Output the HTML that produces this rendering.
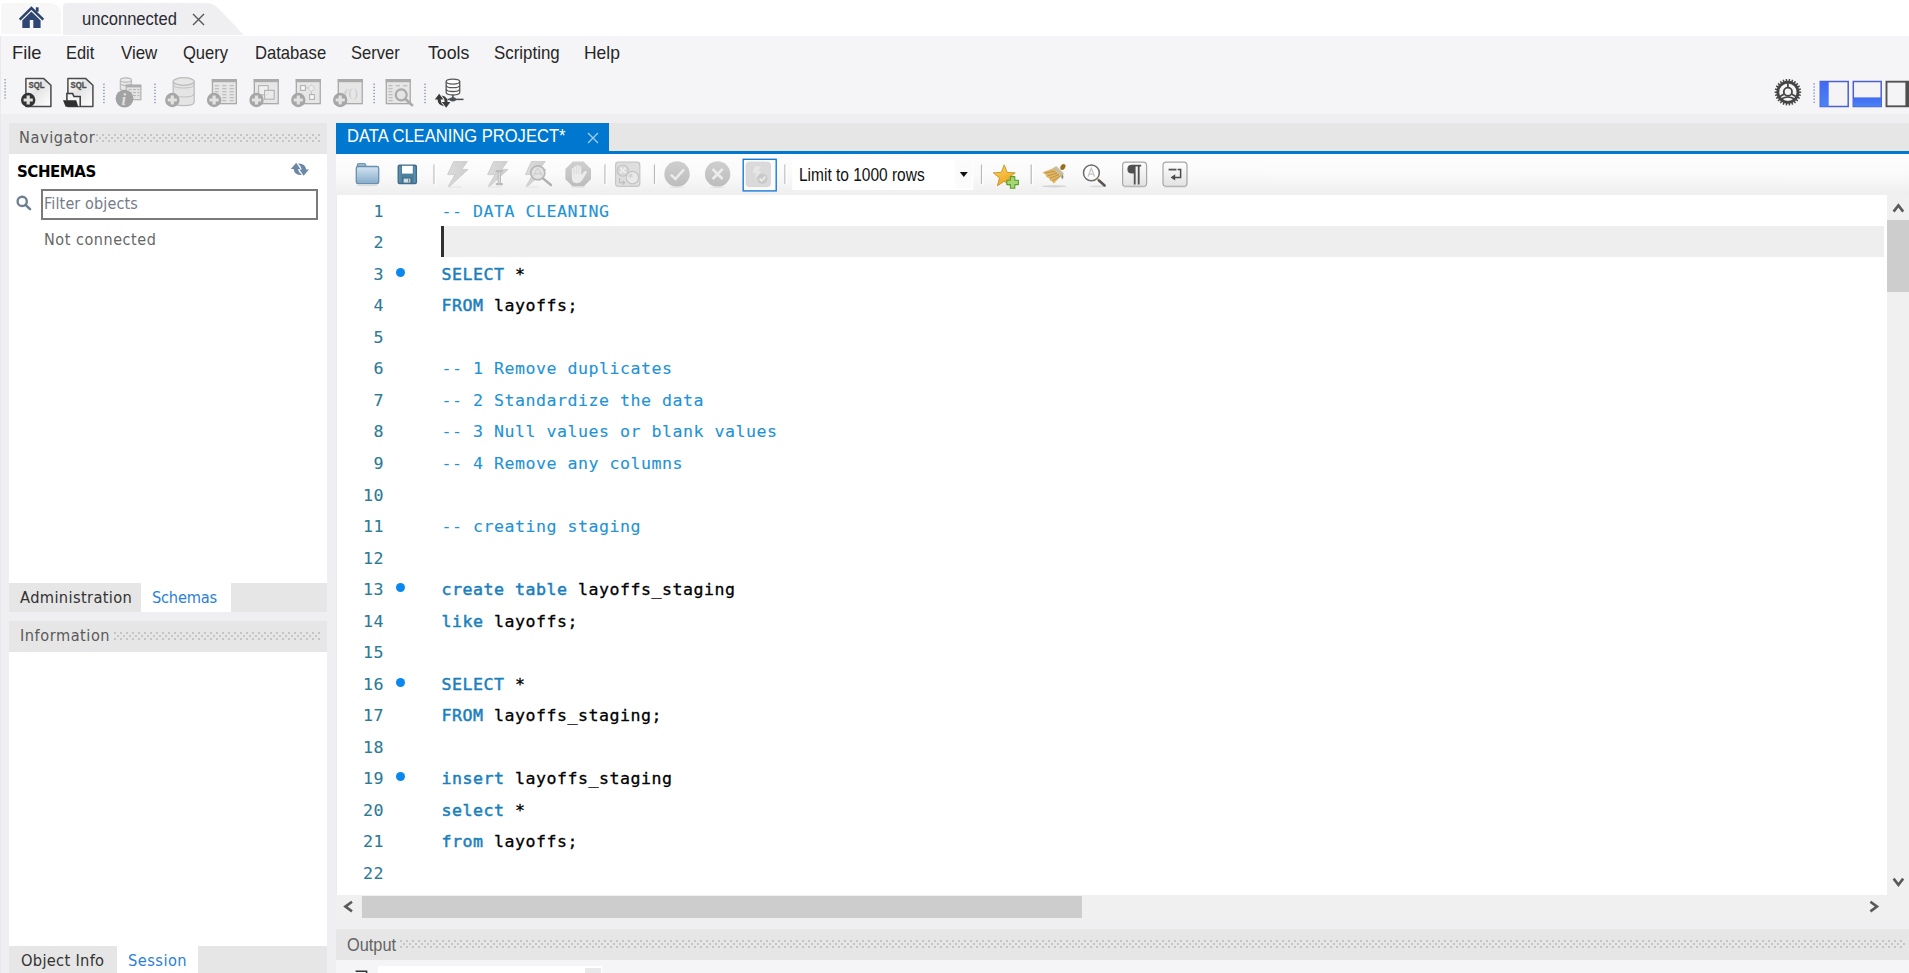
<!DOCTYPE html>
<html lang="en">
<head>
<meta charset="utf-8">
<title>MySQL Workbench</title>
<style>
html,body{margin:0;padding:0;}
body{width:1909px;height:973px;overflow:hidden;position:relative;background:#efeff1;font-family:"Liberation Sans",sans-serif;font-size:16.5px;color:#1a1a1a;}
.abs{position:absolute;}
.t{position:absolute;white-space:nowrap;line-height:1;}
.tah{font-family:"DejaVu Sans",sans-serif;transform:scaleX(0.9);transform-origin:0 0;}
/* top tab strip */
#topstrip{left:0;top:0;width:1909px;height:35.5px;background:#fff;}
#hometab{left:1px;top:2.6px;width:60.3px;height:31.2px;background:#f7f7f8;border-top-right-radius:11px 10px;border-top-left-radius:4px;}
#conntab{left:62.9px;top:2.7px;width:190px;height:32.8px;}
#menubar{left:0;top:35.5px;width:1909px;height:78px;background:#f5f5f7;}
.menu{top:43.2px;font-size:19px;color:#262626;transform-origin:0 0;}
.ms{font-size:19px;transform-origin:0 0;}
/* panels */
.hdr{background:#e6e6e6;}
.hdr .t{color:#5a5a5a;}
.dots{position:absolute;height:8px;background-image:radial-gradient(circle at 1px 1px,#b6b6b6 0.55px,transparent 1.05px),radial-gradient(circle at 1px 1px,#b6b6b6 0.55px,transparent 1.05px);background-size:6px 6px,6px 6px;background-position:0 0,3px 3px;}
/* editor */
#editor{left:336px;top:195px;width:1551px;height:700px;background:#fff;overflow:hidden;}
.ln{position:absolute;left:0;width:48px;text-align:right;color:#2b7a96;-webkit-text-stroke:0.1px currentColor;}
.code{-webkit-text-stroke:0.3px currentColor;font-family:"DejaVu Sans Mono","Liberation Mono",monospace;font-size:16.6px;letter-spacing:0.507px;white-space:pre;line-height:31.52px;}
.row{position:absolute;left:0;height:31.52px;width:1548px;}
.row .ln{top:0;}
.row .tx{position:absolute;left:105.5px;top:0;color:#000;}
.c{color:#1e93d6;-webkit-text-stroke:0.12px currentColor;}
.k{color:#1b7fbd;-webkit-text-stroke:0.5px currentColor;}
.dot{position:absolute;left:59.9px;top:8.9px;width:9.2px;height:9.2px;border-radius:50%;background:#0b88ee;}
</style>
</head>
<body>
<!-- TOP TAB STRIP -->
<div class="abs" id="topstrip"></div>
<div class="abs" id="hometab"></div>
<svg class="abs" id="conntab" viewBox="0 0 190 33.3" preserveAspectRatio="none"><path d="M0 33.3 L0 4 Q0 0 4 0 L142 0 Q150 0 155 5 L181.6 33.3 Z" fill="#efeff1"/></svg>
<svg class="abs" style="left:16px;top:4px" width="32" height="26" viewBox="16 4 32 26"><path d="M19.7 19.7 L31.4 8 L43.3 19.7" fill="none" stroke="#2d436e" stroke-width="2.5"/><rect x="35.8" y="7.3" width="2.8" height="4.4" fill="#2d436e"/><path d="M22.3 27.9 V20.4 L31.4 11.5 L40.6 20.4 V27.9 H33.3 V20.1 H29.8 V27.9 Z" fill="#2f4672"/></svg>
<div class="t ms" style="left:82.13px;top:9.1px;color:#2a2a33;transform:scaleX(0.872)">unconnected</div>
<svg class="abs" style="left:192px;top:13px" width="13" height="13" viewBox="0 0 13 13"><path d="M1 1 L12 12 M12 1 L1 12" stroke="#555" stroke-width="1.4" fill="none"/></svg>

<!-- MENU BAR + TOOLBAR -->
<div class="abs" id="menubar"></div>
<div class="t menu" style="left:11.94px;transform:scaleX(0.964)">File</div>
<div class="t menu" style="left:66.14px;transform:scaleX(0.863)">Edit</div>
<div class="t menu" style="left:121.3px;transform:scaleX(0.888)">View</div>
<div class="t menu" style="left:183.3px;transform:scaleX(0.871)">Query</div>
<div class="t menu" style="left:254.92px;transform:scaleX(0.875)">Database</div>
<div class="t menu" style="left:351.0px;transform:scaleX(0.869)">Server</div>
<div class="t menu" style="left:427.7px;transform:scaleX(0.933)">Tools</div>
<div class="t menu" style="left:493.7px;transform:scaleX(0.889)">Scripting</div>
<div class="t menu" style="left:584.28px;transform:scaleX(0.92)">Help</div>
<div id="maintools"><svg class="abs" style="left:0;top:68px" width="1909" height="48" viewBox="0 68 1909 48"><defs><linearGradient id="pg" x1="0" y1="0" x2="1" y2="1"><stop offset="0" stop-color="#ffffff"/><stop offset="0.45" stop-color="#e4e4e4"/><stop offset="1" stop-color="#ffffff"/></linearGradient><linearGradient id="bl1" x1="0" y1="0" x2="0" y2="1"><stop offset="0" stop-color="#4169f2"/><stop offset="1" stop-color="#4a84f5"/></linearGradient></defs><rect x="4.3" y="79.10" width="1.7" height="1.3" fill="#93a2c2"/><rect x="4.3" y="82.15" width="1.7" height="1.3" fill="#93a2c2"/><rect x="4.3" y="85.20" width="1.7" height="1.3" fill="#93a2c2"/><rect x="4.3" y="88.25" width="1.7" height="1.3" fill="#93a2c2"/><rect x="4.3" y="91.30" width="1.7" height="1.3" fill="#93a2c2"/><rect x="4.3" y="94.35" width="1.7" height="1.3" fill="#93a2c2"/><rect x="4.3" y="97.40" width="1.7" height="1.3" fill="#93a2c2"/><rect x="103.1" y="83.60" width="1.7" height="1.3" fill="#93a2c2"/><rect x="103.1" y="86.65" width="1.7" height="1.3" fill="#93a2c2"/><rect x="103.1" y="89.70" width="1.7" height="1.3" fill="#93a2c2"/><rect x="103.1" y="92.75" width="1.7" height="1.3" fill="#93a2c2"/><rect x="103.1" y="95.80" width="1.7" height="1.3" fill="#93a2c2"/><rect x="103.1" y="98.85" width="1.7" height="1.3" fill="#93a2c2"/><rect x="103.1" y="101.90" width="1.7" height="1.3" fill="#93a2c2"/><rect x="154.1" y="83.60" width="1.7" height="1.3" fill="#93a2c2"/><rect x="154.1" y="86.65" width="1.7" height="1.3" fill="#93a2c2"/><rect x="154.1" y="89.70" width="1.7" height="1.3" fill="#93a2c2"/><rect x="154.1" y="92.75" width="1.7" height="1.3" fill="#93a2c2"/><rect x="154.1" y="95.80" width="1.7" height="1.3" fill="#93a2c2"/><rect x="154.1" y="98.85" width="1.7" height="1.3" fill="#93a2c2"/><rect x="154.1" y="101.90" width="1.7" height="1.3" fill="#93a2c2"/><rect x="373.3" y="83.60" width="1.7" height="1.3" fill="#93a2c2"/><rect x="373.3" y="86.65" width="1.7" height="1.3" fill="#93a2c2"/><rect x="373.3" y="89.70" width="1.7" height="1.3" fill="#93a2c2"/><rect x="373.3" y="92.75" width="1.7" height="1.3" fill="#93a2c2"/><rect x="373.3" y="95.80" width="1.7" height="1.3" fill="#93a2c2"/><rect x="373.3" y="98.85" width="1.7" height="1.3" fill="#93a2c2"/><rect x="373.3" y="101.90" width="1.7" height="1.3" fill="#93a2c2"/><rect x="424.2" y="83.60" width="1.7" height="1.3" fill="#93a2c2"/><rect x="424.2" y="86.65" width="1.7" height="1.3" fill="#93a2c2"/><rect x="424.2" y="89.70" width="1.7" height="1.3" fill="#93a2c2"/><rect x="424.2" y="92.75" width="1.7" height="1.3" fill="#93a2c2"/><rect x="424.2" y="95.80" width="1.7" height="1.3" fill="#93a2c2"/><rect x="424.2" y="98.85" width="1.7" height="1.3" fill="#93a2c2"/><rect x="424.2" y="101.90" width="1.7" height="1.3" fill="#93a2c2"/><rect x="1813.3" y="83.30" width="1.7" height="1.3" fill="#93a2c2"/><rect x="1813.3" y="86.35" width="1.7" height="1.3" fill="#93a2c2"/><rect x="1813.3" y="89.40" width="1.7" height="1.3" fill="#93a2c2"/><rect x="1813.3" y="92.45" width="1.7" height="1.3" fill="#93a2c2"/><rect x="1813.3" y="95.50" width="1.7" height="1.3" fill="#93a2c2"/><rect x="1813.3" y="98.55" width="1.7" height="1.3" fill="#93a2c2"/><rect x="1813.3" y="101.60" width="1.7" height="1.3" fill="#93a2c2"/><path d="M25.9 78.4 H43.5 L50.9 85.2 V106.6 H25.9 Z" fill="url(#pg)" stroke="#4a4a4a" stroke-width="1.5" stroke-linejoin="round"/><text x="28.5" y="87.9" font-family="Liberation Sans,sans-serif" font-weight="bold" font-size="9.4" fill="#505050" stroke="#505050" stroke-width="0.35" textLength="16" lengthAdjust="spacingAndGlyphs">SQL</text><circle cx="28.2" cy="100" r="7.2" fill="#333333"/><path d="M23.6 100 H32.8 M28.2 95.4 V104.6" stroke="#e0e0e0" stroke-width="3.2" fill="none"/><path d="M67.9 78.4 H85.5 L92.9 85.2 V106.6 H67.9 Z" fill="url(#pg)" stroke="#4a4a4a" stroke-width="1.5" stroke-linejoin="round"/><text x="70.5" y="87.9" font-family="Liberation Sans,sans-serif" font-weight="bold" font-size="9.4" fill="#505050" stroke="#505050" stroke-width="0.35" textLength="16" lengthAdjust="spacingAndGlyphs">SQL</text><path d="M66.9 100.5 V93.6 H72.6 L74 96.6 H80.2 V106.6" fill="#f4f4f4" stroke="#3a3a3a" stroke-width="1.5"/><path d="M63 100.3 H76.2 L78.2 106.8 H65.6 Z" fill="#2f2f2f"/><g><path d="M120.3 80 V89.5 Q126 92.5 131.4 89.5 V80" fill="#e6e6e6" stroke="#b8b8b8" stroke-width="1.1"/><ellipse cx="125.85" cy="80" rx="5.55" ry="2.1" fill="#ececec" stroke="#b8b8b8" stroke-width="1.1"/><path d="M120.3 84.2 Q126 87 131.4 84.2" fill="none" stroke="#b8b8b8" stroke-width="1.1"/><rect x="126.2" y="85" width="14.7" height="14.7" fill="#e4e4e4" stroke="#adadad" stroke-width="1.1"/><rect x="126.2" y="85" width="14.7" height="2.4" fill="#adadad"/><path d="M128.5 89.6 H131.5 M133 89.6 H136 M137.3 89.6 H139.6 M128.5 92.6 H131.5 M133 92.6 H136 M137.3 92.6 H139.6 M133 95.6 H136 M137.3 95.6 H139.6" stroke="#b5b5b5" stroke-width="1"/><circle cx="124.5" cy="98.6" r="8.9" fill="#a2a2a2"/><text x="121.6" y="104.6" font-family="Liberation Serif,serif" font-style="italic" font-weight="bold" font-size="16.5" fill="#dedede">i</text></g><g><path d="M173.2 81.5 V102 Q173.2 105.6 183.7 105.6 Q194.2 105.6 194.2 102 V81.5" fill="#e4e4e4" stroke="#bbbbbb" stroke-width="1.2"/><ellipse cx="183.7" cy="81.5" rx="10.5" ry="3.8" fill="#e6e6e6" stroke="#bbbbbb" stroke-width="1.2"/><path d="M173.2 84.2 Q173.2 88 183.7 88 Q194.2 88 194.2 84.2 M173.2 93.5 Q173.2 97 183.7 97 Q194.2 97 194.2 93.5" fill="none" stroke="#c2c2c2" stroke-width="1.1"/></g><circle cx="172.3" cy="100" r="7.2" fill="#a6a6a6"/><path d="M167.70000000000002 100 H176.9 M172.3 95.4 V104.6" stroke="#e2e2e2" stroke-width="3.2" fill="none"/><rect x="211.8" y="79" width="25.2" height="25.3" fill="#e6e6e6"/><rect x="212.45000000000002" y="79.65" width="23.9" height="24" fill="none" stroke="#aaaaaa" stroke-width="1.3"/><rect x="211.8" y="79" width="25.2" height="3.2" fill="#aaaaaa"/><path d="M214.7 85.7 h4.2 M222.2 85.7 h4.2 M229.6 85.7 h4.2 M214.7 88.7 h4.2 M222.2 88.7 h4.2 M229.6 88.7 h4.2 M214.7 91.7 h4.2 M222.2 91.7 h4.2 M229.6 91.7 h4.2 M214.7 94.7 h4.2 M222.2 94.7 h4.2 M229.6 94.7 h4.2 M214.7 97.7 h4.2 M222.2 97.7 h4.2 M229.6 97.7 h4.2 M214.7 100.7 h4.2 M222.2 100.7 h4.2 M229.6 100.7 h4.2 " stroke="#b3b3b3" stroke-width="1.1" fill="none"/><circle cx="214.1" cy="100" r="7.2" fill="#a6a6a6"/><path d="M209.5 100 H218.7 M214.1 95.4 V104.6" stroke="#e2e2e2" stroke-width="3.2" fill="none"/><rect x="253.7" y="79" width="25.2" height="25.3" fill="#e6e6e6"/><rect x="254.35" y="79.65" width="23.9" height="24" fill="none" stroke="#aaaaaa" stroke-width="1.3"/><rect x="253.7" y="79" width="25.2" height="3.2" fill="#aaaaaa"/><rect x="258.6" y="85.6" width="9.6" height="9.2" fill="#efefef" stroke="#b3b3b3" stroke-width="1.1"/><rect x="264.6" y="90.4" width="9.6" height="8.8" fill="#ececec" fill-opacity="0.8" stroke="#b3b3b3" stroke-width="1.1"/><circle cx="256.5" cy="100" r="7.2" fill="#a6a6a6"/><path d="M251.9 100 H261.1 M256.5 95.4 V104.6" stroke="#e2e2e2" stroke-width="3.2" fill="none"/><rect x="295.7" y="79" width="25.2" height="25.3" fill="#e6e6e6"/><rect x="296.34999999999997" y="79.65" width="23.9" height="24" fill="none" stroke="#aaaaaa" stroke-width="1.3"/><rect x="295.7" y="79" width="25.2" height="3.2" fill="#aaaaaa"/><rect x="300.6" y="85.6" width="4.8" height="4.8" fill="#f8f8f8" stroke="#b0b0b0" stroke-width="1.1"/><path d="M305.4 88 H307.8 M311.3 91.4 V94.4" stroke="#c2c2c2" stroke-width="1"/><path d="M311.3 84.8 L314.8 88.2 L311.3 91.6 L307.8 88.2 Z" fill="#ececec" stroke="#c8c8c8" stroke-width="1"/><rect x="309.6" y="94.6" width="4.8" height="4.8" fill="#f8f8f8" stroke="#b0b0b0" stroke-width="1.1"/><circle cx="298.3" cy="100" r="7.2" fill="#a6a6a6"/><path d="M293.7 100 H302.90000000000003 M298.3 95.4 V104.6" stroke="#e2e2e2" stroke-width="3.2" fill="none"/><rect x="337.7" y="79" width="25.2" height="25.3" fill="#e6e6e6"/><rect x="338.34999999999997" y="79.65" width="23.9" height="24" fill="none" stroke="#aaaaaa" stroke-width="1.3"/><rect x="337.7" y="79" width="25.2" height="3.2" fill="#aaaaaa"/><text x="343.2" y="97.6" font-family="Liberation Serif,serif" font-style="italic" font-size="13.5" fill="#c6c6c6">f</text><text x="348.6" y="97.2" font-family="Liberation Serif,serif" font-size="13" fill="#cbcbcb" letter-spacing="0.6">()</text><circle cx="340.2" cy="100" r="7.2" fill="#a6a6a6"/><path d="M335.59999999999997 100 H344.8 M340.2 95.4 V104.6" stroke="#e2e2e2" stroke-width="3.2" fill="none"/><rect x="385.7" y="79" width="25.2" height="25.3" fill="#e6e6e6"/><rect x="386.34999999999997" y="79.65" width="23.9" height="24" fill="none" stroke="#aaaaaa" stroke-width="1.3"/><rect x="385.7" y="79" width="25.2" height="3.2" fill="#aaaaaa"/><path d="M388.4 85.7 h4.2 M388.4 88.7 h4.2 M388.4 91.7 h4.2 M388.4 94.7 h4.2 M388.4 97.7 h4.2 M388.4 100.7 h4.2 M395.8 85.7 h4.2 M403.2 85.7 h4.2" stroke="#b3b3b3" stroke-width="1.1" fill="none"/><circle cx="401.2" cy="94.8" r="5.5" fill="#e4e4e4" stroke="#aaaaaa" stroke-width="2.2"/><path d="M405.6 99.2 L412.2 105.2" stroke="#aaaaaa" stroke-width="2.6" stroke-linecap="round"/><g><path d="M446.2 81.6 V92.6 Q446.2 95 452.9 95 Q459.7 95 459.7 92.6 V81.6" fill="#ffffff" stroke="#5a5a5a" stroke-width="1.3"/><ellipse cx="452.95" cy="81.6" rx="6.75" ry="2.5" fill="#ffffff" stroke="#5a5a5a" stroke-width="1.3"/><path d="M446.2 85.2 Q446.2 87.7 452.9 87.7 Q459.7 87.7 459.7 85.2 M446.2 89 Q446.2 91.5 452.9 91.5 Q459.7 91.5 459.7 89" fill="none" stroke="#5a5a5a" stroke-width="1.3"/><path d="M452.9 95 V98" stroke="#555" stroke-width="1.6"/><path d="M447.5 99.4 H463.5" stroke="#4a4a4a" stroke-width="1.5"/><ellipse cx="452.8" cy="99.3" rx="3.3" ry="2.1" fill="#48515a"/><path d="M434.8 99.6 L439.2 93.8 L443.4 99.6 L440.6 99.6 Q440.8 103.6 444 106.2 Q437.6 105.2 437.6 99.6 Z" fill="#3a3a3a"/><path d="M450.4 102 L446.2 107.8 L441.8 102 L444.6 102 Q444.6 98.4 441.6 95.6 Q447.6 96.8 447.6 102 Z" fill="#3a3a3a"/></g><g><path d="M1798.70 92.20 L1801.20 92.20 M1798.39 94.78 L1800.81 95.38 M1797.46 97.22 L1799.68 98.38 M1795.98 99.36 L1797.86 101.02 M1794.04 101.09 L1795.46 103.15 M1791.73 102.30 L1792.62 104.64 M1789.20 102.92 L1789.50 105.40 M1786.60 102.92 L1786.30 105.40 M1784.07 102.30 L1783.18 104.64 M1781.76 101.09 L1780.34 103.15 M1779.82 99.36 L1777.94 101.02 M1778.34 97.22 L1776.12 98.38 M1777.41 94.78 L1774.99 95.38 M1777.10 92.20 L1774.60 92.20 M1777.41 89.62 L1774.99 89.02 M1778.34 87.18 L1776.12 86.02 M1779.82 85.04 L1777.94 83.38 M1781.76 83.31 L1780.34 81.25 M1784.07 82.10 L1783.18 79.76 M1786.60 81.48 L1786.30 79.00 M1789.20 81.48 L1789.50 79.00 M1791.73 82.10 L1792.62 79.76 M1794.04 83.31 L1795.46 81.25 M1795.98 85.04 L1797.86 83.38 M1797.46 87.18 L1799.68 86.02 M1798.39 89.62 L1800.81 89.02 " stroke="#4a4a4a" stroke-width="1.5" fill="none"/><circle cx="1787.9" cy="92.2" r="10.1" fill="none" stroke="#444" stroke-width="2.8"/><circle cx="1787.9" cy="91.8" r="4.1" fill="#f5f5f7" stroke="#444" stroke-width="1.8"/><path d="M1787.9 87.8 V83.2 M1784.3000000000002 94.0 L1779.9 96.60000000000001 M1791.5 94.0 L1795.9 96.60000000000001" stroke="#444" stroke-width="1.8"/><path d="M1781.7 98.8 Q1787.9 95.2 1794.1000000000001 98.8" stroke="#444" stroke-width="1.6" fill="none"/></g><rect x="1820.3" y="81.5" width="27.9" height="25" fill="#f4f4f6" stroke="#4c5fcd" stroke-width="1.5"/><rect x="1820.3" y="81.5" width="8.4" height="25" fill="url(#bl1)"/><rect x="1853.3" y="81.5" width="27.9" height="25" fill="#f4f4f6" stroke="#4c5fcd" stroke-width="1.5"/><rect x="1853.3" y="97.4" width="27.9" height="9.1" fill="url(#bl1)"/><rect x="1886.5" y="81.7" width="27.9" height="24.6" fill="#f4f4f6" stroke="#555" stroke-width="1.9"/><rect x="1905.4" y="81" width="6" height="26" fill="#4f4f4f"/></svg></div>

<!-- LEFT SIDEBAR -->
<div class="abs" style="left:0;top:36px;width:1px;height:937px;background:#e9e9eb"></div>
<div class="abs" style="left:9px;top:123px;width:318px;height:850px;background:#fff"></div>
<div class="abs hdr" style="left:9px;top:122.5px;width:318px;height:31.5px"><div class="t tah" style="left:9.6px;top:7.1px;font-size:16.2px;letter-spacing:0.63px">Navigator</div><div class="dots" style="left:87px;top:11.7px;width:225px"></div></div>
<div class="t tah" style="left:16.9px;top:162.5px;font-weight:bold;font-size:16.7px;letter-spacing:-0.50px;color:#000">SCHEMAS</div>
<svg class="abs" style="left:290px;top:161px" width="20" height="16" viewBox="290 161 20 16"><path d="M290.8 168.9 L296.2 162.8 L300.4 168.9 L298 168.9 Q298.6 172.6 302 175 Q294.4 175.4 293.6 168.9 Z" fill="#6d87a8"/><path d="M309 169.6 L303.6 175.7 L299.4 169.6 L301.8 169.6 Q301.2 165.9 297.8 163.5 Q305.4 163.1 306.2 169.6 Z" fill="#6d87a8"/></svg>
<svg class="abs" style="left:14px;top:193px" width="20" height="20" viewBox="14 193 20 20"><circle cx="22.2" cy="201.4" r="4.6" fill="none" stroke="#6f7f92" stroke-width="2.4"/><path d="M25.6 204.8 L30 209.2" stroke="#6f7f92" stroke-width="2.6" stroke-linecap="round"/></svg>
<div class="abs" style="left:41px;top:189px;width:273px;height:27px;border:2px solid #7a7a7a;background:#fff"></div>
<div class="t tah" style="left:43.9px;top:195.8px;font-size:16px;letter-spacing:0.14px;color:#747b89">Filter objects</div>
<div class="t tah" style="left:44.4px;top:232.1px;font-size:16px;letter-spacing:0.61px;color:#666">Not connected</div>
<div class="abs hdr" style="left:9px;top:583.4px;width:318px;height:29px"></div>
<div class="abs" style="left:141px;top:583.4px;width:90px;height:29px;background:#fff"></div>
<div class="t tah" style="left:19.6px;top:589.9px;font-size:16.3px;letter-spacing:0.40px;color:#333">Administration</div>
<div class="t tah" style="left:152.3px;top:589.9px;font-size:16.3px;letter-spacing:-0.28px;color:#2b7fd6">Schemas</div>
<div class="abs" style="left:9px;top:611.5px;width:318px;height:10.5px;background:#efeff1"></div>
<div class="abs hdr" style="left:9px;top:621.1px;width:318px;height:30.5px"><div class="t tah" style="left:10.6px;top:6.6px;font-size:16.2px;letter-spacing:0.58px">Information</div><div class="dots" style="left:105px;top:11.4px;width:207px"></div></div>
<div class="abs hdr" style="left:9px;top:946.2px;width:318px;height:27px"></div>
<div class="abs" style="left:117px;top:946.2px;width:81px;height:27px;background:#fff"></div>
<div class="t tah" style="left:20.7px;top:952.9px;font-size:16.3px;letter-spacing:0.33px;color:#333">Object Info</div>
<div class="t tah" style="left:128.2px;top:952.9px;font-size:16.3px;letter-spacing:0.50px;color:#2b7fd6">Session</div>

<!-- EDITOR TAB STRIP -->
<div class="abs" style="left:336px;top:122.5px;width:1573px;height:28.5px;background:#e6e6e6"></div>
<div class="abs" style="left:336px;top:151px;width:1573px;height:3px;background:#0078d0"></div>
<div class="abs" style="left:336px;top:122.5px;width:273px;height:29.5px;background:#0078d0"></div>
<div class="t ms" style="left:347.1px;top:125.9px;color:#fff;transform:scaleX(0.872)">DATA CLEANING PROJECT*</div>
<svg class="abs" style="left:587px;top:132px" width="12" height="12" viewBox="0 0 12 12"><path d="M1 1 L11 11 M11 1 L1 11" stroke="#a6cdef" stroke-width="1.3" fill="none"/></svg>
<!-- EDITOR TOOLBAR -->
<div class="abs" style="left:336px;top:154px;width:1573px;height:41px;background:linear-gradient(#fdfdfd,#fafafa 50%,#eeeeee)"></div>
<div class="t ms" style="left:798.6px;top:164.9px;color:#111;transform:scaleX(0.815);z-index:2">Limit to 1000 rows</div>
<div id="edtools"><svg class="abs" style="left:336px;top:154px" width="1573" height="41" viewBox="336 154 1573 41"><defs>
<linearGradient id="fo" x1="0" y1="0" x2="0" y2="1"><stop offset="0" stop-color="#d2e5f2"/><stop offset="1" stop-color="#86abc9"/></linearGradient>
<linearGradient id="bt" x1="0" y1="0" x2="0" y2="1"><stop offset="0" stop-color="#fefefe"/><stop offset="1" stop-color="#e2e2e2"/></linearGradient>
<linearGradient id="gc" x1="0" y1="0" x2="0" y2="1"><stop offset="0" stop-color="#cfcfcf"/><stop offset="1" stop-color="#bcbcbc"/></linearGradient>
<linearGradient id="st" x1="0" y1="0" x2="0.4" y2="1"><stop offset="0" stop-color="#fbd95a"/><stop offset="1" stop-color="#eea422"/></linearGradient>
<linearGradient id="bo" x1="0" y1="0" x2="1" y2="0.3"><stop offset="0" stop-color="#dcdcdc"/><stop offset="1" stop-color="#cfcfcf"/></linearGradient>
</defs><rect x="433.4" y="164.5" width="1.3" height="19.5" fill="#b9b9b9"/><rect x="434.7" y="165" width="1.2" height="20" fill="#ffffff"/><rect x="604.4" y="164.5" width="1.3" height="19.5" fill="#b9b9b9"/><rect x="605.7" y="165" width="1.2" height="20" fill="#ffffff"/><rect x="653.9" y="164.5" width="1.3" height="19.5" fill="#b9b9b9"/><rect x="655.2" y="165" width="1.2" height="20" fill="#ffffff"/><rect x="784.3" y="164.5" width="1.3" height="19.5" fill="#b9b9b9"/><rect x="785.6" y="165" width="1.2" height="20" fill="#ffffff"/><rect x="980.9" y="164.5" width="1.3" height="19.5" fill="#b9b9b9"/><rect x="982.2" y="165" width="1.2" height="20" fill="#ffffff"/><rect x="1030.6" y="164.5" width="1.3" height="19.5" fill="#b9b9b9"/><rect x="1031.9" y="165" width="1.2" height="20" fill="#ffffff"/><path d="M357.4 166.4 V165 Q357.4 163.6 358.8 163.6 H364 Q365.4 163.6 365.6 165 L365.9 166.4 Z" fill="#a9c6dc" stroke="#6d93b3" stroke-width="1.2"/><rect x="356.3" y="166.5" width="22.4" height="17.2" rx="1.8" fill="url(#fo)" stroke="#6a8fae" stroke-width="1.3"/><ellipse cx="367.5" cy="185.4" rx="11" ry="0.9" fill="#dcdcdc"/><rect x="398.2" y="165.1" width="18.2" height="18.6" rx="1.4" fill="#4d7f9f" stroke="#3c6c8c" stroke-width="1.3"/><rect x="402" y="165.8" width="10.8" height="7.8" fill="#ffffff"/><rect x="402.3" y="177.4" width="9.8" height="6" fill="#3f6d8c"/><rect x="403.6" y="178.6" width="6.8" height="4" fill="#d5dde3"/><rect x="408" y="178.6" width="1.2" height="4" fill="#6d8ea6"/><path d="M399.9 166.4 V182.4 M414.8 166.4 V182.4" stroke="#6d9ab8" stroke-width="0.9"/><path d="M453.59999999999997 161.6 H467.4 L461.59999999999997 169.4 H468.0 L449.4 186.6 H448.2 L455.0 174.6 H447.59999999999997 Z" fill="url(#bo)" stroke="#c6c6c6" stroke-width="0.8"/><path d="M447.9 187 H461.4" stroke="#e3e3e3" stroke-width="1"/><path d="M493.59999999999997 161.6 H507.4 L501.59999999999997 169.4 H508.0 L489.4 186.6 H488.2 L495.0 174.6 H487.59999999999997 Z" fill="url(#bo)" stroke="#c6c6c6" stroke-width="0.8"/><path d="M487.9 187 H501.4" stroke="#e3e3e3" stroke-width="1"/><path d="M495.8 171.2 H502.8 M495.8 184.2 H502.8" stroke="#bcbcbc" stroke-width="2.2" fill="none"/><path d="M499.3 171.4 V184" stroke="#bcbcbc" stroke-width="3.4"/><path d="M499.3 172.6 V183" stroke="#dedede" stroke-width="1.3"/><path d="M531.4000000000001 161.6 H545.2 L539.4000000000001 169.4 H545.8000000000001 L527.2 186.6 H526.0 L532.8000000000001 174.6 H525.4000000000001 Z" fill="url(#bo)" stroke="#c6c6c6" stroke-width="0.8"/><path d="M525.7 187 H539.2" stroke="#e3e3e3" stroke-width="1"/><circle cx="537.8" cy="172.9" r="7" fill="#e2e2e2" stroke="#b8b8b8" stroke-width="1.7"/><path d="M533.6 175.6 Q535.6 170 537.8 168.6 Q540 170 542 175.6 M535 173.6 H540.6" stroke="#cdcdcd" stroke-width="1.1" fill="none"/><path d="M543.2 178.6 L551 185" stroke="#b0b0b0" stroke-width="2.4" stroke-linecap="round"/><path d="M572.8 161.6 H583.6 L591 169 V179.2 L583.6 186.6 H572.8 L565.4 179.2 V169 Z" fill="url(#gc)"/><path d="M571.8 177 V168.6 Q572.9 167.4 574 168.6 V166.6 Q575.2 165.2 576.4 166.6 V165.8 Q577.6 164.4 578.8 165.8 V166.6 Q580 165.4 581.2 166.6 V175 L584.6 171.2 Q586.6 170.4 587 172.2 L582 180.6 Q580.2 183.2 576.8 183.2 Q571.8 183.2 571.8 177 Z" fill="#ebebeb"/><path d="M574 168.6 V174 M576.4 166.6 V174 M578.8 166.6 V174" stroke="#c9c9c9" stroke-width="0.5"/><ellipse cx="578" cy="187" rx="8" ry="0.8" fill="#e0e0e0"/><rect x="615.6" y="162.2" width="24.2" height="24.2" rx="2.8" fill="#dedede" stroke="#c6c6c6" stroke-width="1.2"/><circle cx="622.8" cy="170.6" r="5.6" fill="#d8d8d8" stroke="#c2c2c2" stroke-width="1.1"/><path d="M620.2 167.6 L625.6 173.2 M625.6 167.6 L620.2 173.2" stroke="#ededed" stroke-width="1.8"/><path d="M619.6 178 V182.6 H624.4 M622.8 180.6 L624.8 182.6 L622.8 184.6" stroke="#bdbdbd" stroke-width="1.1" fill="none"/><circle cx="632.4" cy="177.6" r="6.2" fill="#e9e9e9" stroke="#c4c4c4" stroke-width="1.2"/><path d="M632.4 177.6 V173.6 A4 4 0 0 0 628.4 177.6 Z" fill="#d4d4d4"/><circle cx="677" cy="174" r="12.7" fill="url(#gc)"/><path d="M670.8 174.6 L675.4 179 L684 169.4" stroke="#ebebeb" stroke-width="2.6" fill="none"/><ellipse cx="677" cy="187.2" rx="8" ry="0.7" fill="#e2e2e2"/><circle cx="717.6" cy="174" r="12.7" fill="url(#gc)"/><path d="M712.6 169 L722.6 179 M722.6 169 L712.6 179" stroke="#ebebeb" stroke-width="2.6" fill="none"/><ellipse cx="717.6" cy="187.2" rx="8" ry="0.7" fill="#e2e2e2"/><rect x="743.2" y="159.3" width="33" height="31.6" fill="#fbfbfb" stroke="#1b7bd7" stroke-width="1.4"/><rect x="746.2" y="162.2" width="24.2" height="24.4" rx="3" fill="#dadada" stroke="#d0d0d0" stroke-width="0.8"/><path d="M754.6 165.6 H762.4 L759 170.6 H762.8 L753 181.6 L755.6 173.6 H751.6 Z" fill="#e6e6e6" stroke="#d0d0d0" stroke-width="0.6"/><circle cx="762.4" cy="178.6" r="5.2" fill="#c9c9c9"/><path d="M759.6 178.6 L761.6 180.8 L765.4 176.6" stroke="#eeeeee" stroke-width="1.6" fill="none"/><rect x="792.3" y="158.8" width="181" height="31.2" fill="#ffffff"/><rect x="955.4" y="160.6" width="16.8" height="27.6" fill="#fbfbfb"/><path d="M959.8 171.9 H967.8 L963.8 177 Z" fill="#111"/><polygon points="1004.2,164.8 1007.1,172.4 1015.2,172.8 1008.9,177.9 1011.0,185.8 1004.2,181.3 997.4,185.8 999.5,177.9 993.2,172.8 1001.3,172.4" fill="url(#st)" stroke="#c8922a" stroke-width="0.9" stroke-linejoin="round"/><path d="M1010.4 176.6 H1014.8 V180.2 H1018.4 V184.6 H1014.8 V188.2 H1010.4 V184.6 H1006.8 V180.2 H1010.4 Z" fill="#a4d672" stroke="#5f9c31" stroke-width="1.1" stroke-linejoin="round"/><ellipse cx="1054" cy="186.3" rx="12.3" ry="1.1" fill="#d4d4d4"/><path d="M1042.3 172.5 L1052.6 168.4 L1061.6 175.6 L1053.6 183.8 L1052.6 181.6 L1050 180.4 L1049.2 178.2 L1046.4 177 L1045.8 174.8 Z" fill="#e0b662"/><path d="M1045 173 L1055.4 171 M1047.6 175.8 L1057.4 172.8 M1050 178.4 L1059 174.4 M1052.2 181 L1060.6 176" stroke="#b98f45" stroke-width="0.9" fill="none"/><path d="M1052.4 168.6 L1056.2 166 L1064 173.4 L1061.6 176 Z" fill="#c9bd9e"/><path d="M1062.4 174.6 Q1064.6 176.6 1062.2 179.6 L1061.2 176.6 Z" fill="#8d8674"/><ellipse cx="1062.9" cy="167" rx="2.3" ry="3.1" transform="rotate(32 1062.9 167)" fill="#9b6b1f"/><ellipse cx="1098" cy="186.4" rx="8" ry="0.8" fill="#dadada"/><circle cx="1091.4" cy="172.9" r="7.9" fill="#fdfdfd" stroke="#6c6c6c" stroke-width="1.5"/><path d="M1088 176.8 L1091.3 168.2 L1094.6 176.8 M1089.4 174.2 H1093.2" stroke="#c3c3c3" stroke-width="1.2" fill="none"/><path d="M1097.2 178.8 L1099.4 180.8" stroke="#c8a060" stroke-width="2.2"/><path d="M1099 180.6 L1104.6 185.4" stroke="#555" stroke-width="2.6" stroke-linecap="round"/><rect x="1122.6" y="162.2" width="24" height="24.2" rx="3.2" fill="url(#bt)" stroke="#a6a6a6" stroke-width="1.2"/><path d="M1123.6 187.2 H1145.6" stroke="#dcdcdc" stroke-width="1"/><path d="M1141.2 164.8 H1132 Q1127.4 164.8 1127.4 169.2 Q1127.4 173.6 1132 173.6 H1133.8 V184.4 H1135.6 V166.4 H1137.8 V184.4 H1139.6 V166.4 H1141.2 Z" fill="#505050"/><rect x="1163" y="162.2" width="24" height="24.2" rx="3.2" fill="url(#bt)" stroke="#a6a6a6" stroke-width="1.2"/><path d="M1164 187.2 H1186" stroke="#dcdcdc" stroke-width="1"/><path d="M1168.6 169.6 H1176.4" stroke="#555" stroke-width="1.8"/><path d="M1177.6 169.6 H1180.6 V177.4 H1174.6" stroke="#4a4a4a" stroke-width="1.5" fill="none"/><path d="M1175.2 174.2 V180.6 L1170.6 177.4 Z" fill="#4a4a4a"/></svg></div>

<!-- EDITOR -->
<div class="abs code" id="editor">
<div class="abs" style="left:106px;top:31.1px;width:1442px;height:31.3px;background:#eeeeee"></div>
<div class="abs" style="left:105.1px;top:31.1px;width:3px;height:31.3px;background:#303030"></div>
<div class="row" style="top:0.75px"><span class="ln">1</span><span class="tx"><span class="c">-- DATA CLEANING</span></span></div>
<div class="row" style="top:32.28px"><span class="ln">2</span></div>
<div class="row" style="top:63.81px"><span class="ln">3</span><span class="dot"></span><span class="tx"><span class="k">SELECT</span> *</span></div>
<div class="row" style="top:95.34px"><span class="ln">4</span><span class="tx"><span class="k">FROM</span> layoffs;</span></div>
<div class="row" style="top:126.87px"><span class="ln">5</span></div>
<div class="row" style="top:158.4px"><span class="ln">6</span><span class="tx"><span class="c">-- 1 Remove duplicates</span></span></div>
<div class="row" style="top:189.93px"><span class="ln">7</span><span class="tx"><span class="c">-- 2 Standardize the data</span></span></div>
<div class="row" style="top:221.46px"><span class="ln">8</span><span class="tx"><span class="c">-- 3 Null values or blank values</span></span></div>
<div class="row" style="top:252.99px"><span class="ln">9</span><span class="tx"><span class="c">-- 4 Remove any columns</span></span></div>
<div class="row" style="top:284.52px"><span class="ln">10</span></div>
<div class="row" style="top:316.05px"><span class="ln">11</span><span class="tx"><span class="c">-- creating staging</span></span></div>
<div class="row" style="top:347.58px"><span class="ln">12</span></div>
<div class="row" style="top:379.11px"><span class="ln">13</span><span class="dot"></span><span class="tx"><span class="k">create</span> <span class="k">table</span> layoffs_staging</span></div>
<div class="row" style="top:410.64px"><span class="ln">14</span><span class="tx"><span class="k">like</span> layoffs;</span></div>
<div class="row" style="top:442.17px"><span class="ln">15</span></div>
<div class="row" style="top:473.7px"><span class="ln">16</span><span class="dot"></span><span class="tx"><span class="k">SELECT</span> *</span></div>
<div class="row" style="top:505.23px"><span class="ln">17</span><span class="tx"><span class="k">FROM</span> layoffs_staging;</span></div>
<div class="row" style="top:536.76px"><span class="ln">18</span></div>
<div class="row" style="top:568.29px"><span class="ln">19</span><span class="dot"></span><span class="tx"><span class="k">insert</span> layoffs_staging</span></div>
<div class="row" style="top:599.82px"><span class="ln">20</span><span class="tx"><span class="k">select</span> *</span></div>
<div class="row" style="top:631.35px"><span class="ln">21</span><span class="tx"><span class="k">from</span> layoffs;</span></div>
<div class="row" style="top:662.88px"><span class="ln">22</span></div>
</div>

<div class="abs" style="left:336px;top:195px;width:1px;height:700px;background:#ebebeb"></div>
<!-- SCROLLBARS -->
<div class="abs" style="left:1887px;top:195px;width:22px;height:700px;background:#f0f0f0"></div>
<div class="abs" style="left:1887px;top:220px;width:22px;height:72px;background:#cdcdcd"></div>
<svg class="abs" style="left:1887px;top:195px" width="22" height="700" viewBox="1887 195 22 700"><path d="M1893.6 211.6 L1898.4 205.4 L1903.2 211.6" fill="none" stroke="#5a5a5a" stroke-width="2.6"/><path d="M1893.6 878.6 L1898.4 884.8 L1903.2 878.6" fill="none" stroke="#5a5a5a" stroke-width="2.6"/></svg>
<div class="abs" style="left:336px;top:895px;width:1573px;height:24px;background:#f0f0f0"></div>
<div class="abs" style="left:361.5px;top:895.8px;width:720px;height:22px;background:#cdcdcd"></div>
<svg class="abs" style="left:336px;top:895px" width="1573" height="24" viewBox="336 895 1573 24"><path d="M352 901.8 L345.4 906.6 L352 911.4" fill="none" stroke="#5a5a5a" stroke-width="2.6"/><path d="M1870.4 901.8 L1877 906.6 L1870.4 911.4" fill="none" stroke="#5a5a5a" stroke-width="2.6"/></svg>

<!-- OUTPUT -->
<div class="abs hdr" style="left:336px;top:928.6px;width:1573px;height:31px"><div class="t ms" style="left:10.6px;top:6.6px;transform:scaleX(0.86);color:#636363">Output</div><div class="dots" style="left:64px;top:11.4px;width:1505px"></div></div>
<div class="abs" style="left:336px;top:959.6px;width:1573px;height:14px;background:#f5f5f7"></div>
<div class="abs" style="left:378.1px;top:966.4px;width:224.3px;height:7px;background:#fff"></div>
<div class="abs" style="left:585.2px;top:968px;width:16.3px;height:5px;background:#e9e9e9"></div>
<svg class="abs" style="left:354px;top:969px" width="16" height="4" viewBox="354 969 16 4"><path d="M355.6 971.3 H366.6 V973" fill="none" stroke="#333" stroke-width="1.5"/></svg>
</body>
</html>
